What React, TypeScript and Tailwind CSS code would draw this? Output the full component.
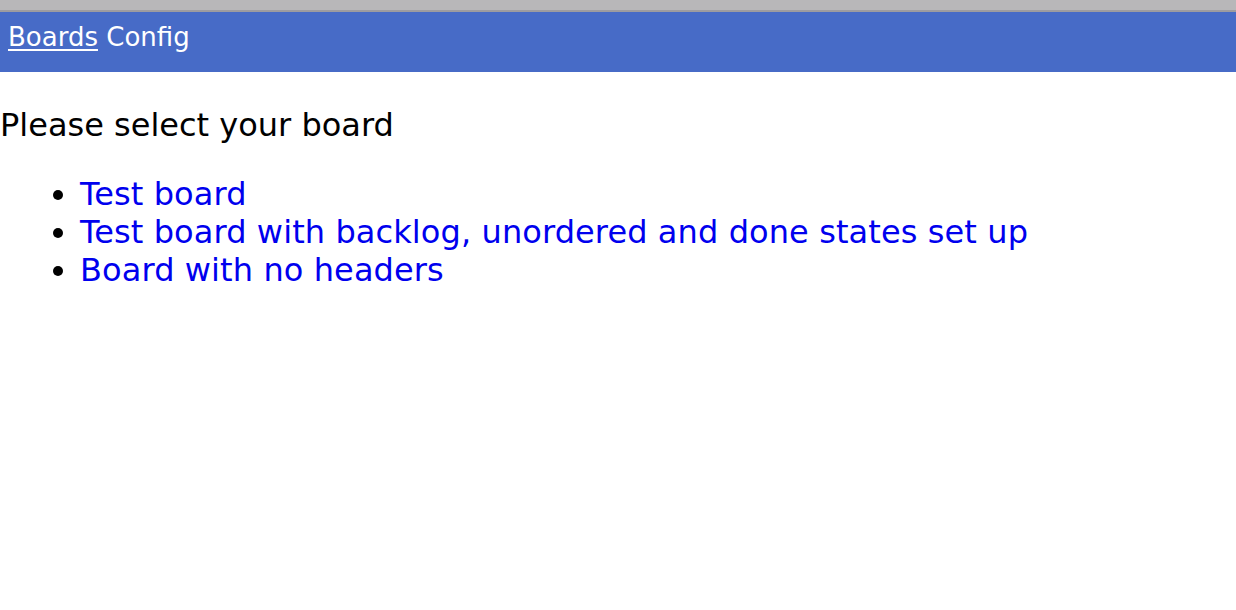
import React from 'react';

const boards = [
  'Test board',
  'Test board with backlog, unordered and done states set up',
  'Board with no headers',
];

const App: React.FC = () => {
  return (
    <div className="min-h-[610px] bg-white font-['DejaVu_Sans',Verdana,sans-serif]">
      {/* top strip */}
      <div className="h-[10px] bg-[#b8b7b9]" />
      <div className="h-[2px] bg-[#9d9ca0]" />

      <div className="h-[60px] bg-[#476bc7] px-[8px] pt-[12px] text-[26px] leading-[26px] text-white">
        <a href="#" className="underline underline-offset-[3px]">Boards</a> Config
      </div>

      <p className="mt-[34px] text-[32px] leading-[38px] text-black">Please select your board</p>

      <ul className="mt-[31px] list-disc pl-[80px] text-[32px] leading-[38px] tracking-[0.1px]">
        {boards.map((b) => (
          <li key={b} className="text-black">
            <a href="#" className="text-[#0000ee]">{b}</a>
          </li>
        ))}
      </ul>
    </div>
  );
};

export default App;
